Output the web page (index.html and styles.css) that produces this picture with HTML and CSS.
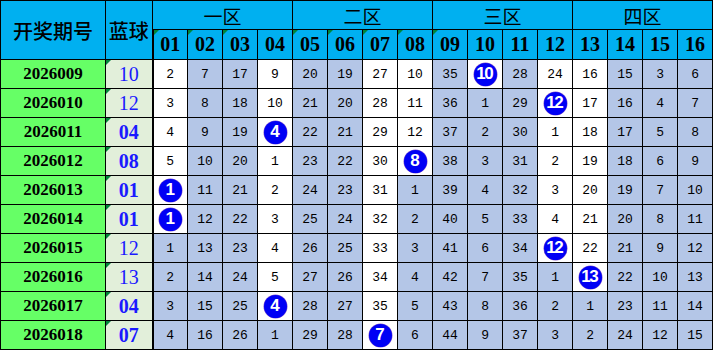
FILE: index.html
```html
<!DOCTYPE html>
<html lang="zh">
<head>
<meta charset="utf-8">
<title>蓝球遗漏</title>
<link rel="stylesheet" href="styles.css">
</head>
<body>
<table class="grid">
<colgroup><col class="c-per"><col class="c-blue"><col span="16" class="c-num"></colgroup>
<thead>
<tr class="h1">
<th rowspan="2" class="per-h">开奖期号</th>
<th rowspan="2" class="blue-h">蓝球</th>
<th colspan="4" class="zone z1">一区</th>
<th colspan="4" class="zone">二区</th>
<th colspan="4" class="zone">三区</th>
<th colspan="4" class="zone">四区</th>
</tr>
<tr class="h2">
<th class="num-h first tri">01</th><th class="num-h tri">02</th><th class="num-h tri">03</th><th class="num-h">04</th>
<th class="num-h tri">05</th><th class="num-h tri">06</th><th class="num-h tri">07</th><th class="num-h tri">08</th>
<th class="num-h tri">09</th><th class="num-h">10</th><th class="num-h">11</th><th class="num-h">12</th>
<th class="num-h">13</th><th class="num-h">14</th><th class="num-h">15</th><th class="num-h">16</th>
</tr>
</thead>
<tbody>
<tr><td class="per">2026009</td><td class="bl tri">10</td>
<td class="first w">2</td><td>7</td><td>17</td><td class="w">9</td>
<td>20</td><td>19</td><td class="w">27</td><td class="w">10</td>
<td>35</td><td class="w"><span class="ball">10</span></td><td>28</td><td class="w">24</td>
<td class="w">16</td><td>15</td><td>3</td><td class="last">6</td></tr>

<tr><td class="per">2026010</td><td class="bl tri">12</td>
<td class="first w">3</td><td>8</td><td>18</td><td class="w">10</td>
<td>21</td><td>20</td><td class="w">28</td><td class="w">11</td>
<td>36</td><td>1</td><td>29</td><td class="w"><span class="ball">12</span></td>
<td class="w">17</td><td>16</td><td>4</td><td class="last">7</td></tr>

<tr><td class="per">2026011</td><td class="bl tri bold">04</td>
<td class="first w">4</td><td>9</td><td>19</td><td class="w"><span class="ball">4</span></td>
<td>22</td><td>21</td><td class="w">29</td><td class="w">12</td>
<td>37</td><td>2</td><td>30</td><td class="w">1</td>
<td class="w">18</td><td>17</td><td>5</td><td class="last">8</td></tr>

<tr><td class="per">2026012</td><td class="bl tri bold">08</td>
<td class="first w">5</td><td>10</td><td>20</td><td class="w">1</td>
<td>23</td><td>22</td><td class="w">30</td><td class="w"><span class="ball">8</span></td>
<td>38</td><td>3</td><td>31</td><td class="w">2</td>
<td class="w">19</td><td>18</td><td>6</td><td class="last">9</td></tr>

<tr><td class="per">2026013</td><td class="bl tri bold">01</td>
<td class="first w"><span class="ball">1</span></td><td>11</td><td>21</td><td class="w">2</td>
<td>24</td><td>23</td><td class="w">31</td><td>1</td>
<td>39</td><td>4</td><td>32</td><td class="w">3</td>
<td class="w">20</td><td>19</td><td>7</td><td class="last">10</td></tr>

<tr><td class="per">2026014</td><td class="bl tri bold">01</td>
<td class="first w"><span class="ball">1</span></td><td>12</td><td>22</td><td class="w">3</td>
<td>25</td><td>24</td><td class="w">32</td><td>2</td>
<td>40</td><td>5</td><td>33</td><td class="w">4</td>
<td class="w">21</td><td>20</td><td>8</td><td class="last">11</td></tr>

<tr><td class="per">2026015</td><td class="bl tri">12</td>
<td class="first">1</td><td>13</td><td>23</td><td class="w">4</td>
<td>26</td><td>25</td><td class="w">33</td><td>3</td>
<td>41</td><td>6</td><td>34</td><td class="w"><span class="ball">12</span></td>
<td class="w">22</td><td>21</td><td>9</td><td class="last">12</td></tr>

<tr><td class="per">2026016</td><td class="bl tri">13</td>
<td class="first">2</td><td>14</td><td>24</td><td class="w">5</td>
<td>27</td><td>26</td><td class="w">34</td><td>4</td>
<td>42</td><td>7</td><td>35</td><td>1</td>
<td class="w"><span class="ball">13</span></td><td>22</td><td>10</td><td class="last">13</td></tr>

<tr><td class="per">2026017</td><td class="bl tri bold">04</td>
<td class="first">3</td><td>15</td><td>25</td><td class="w"><span class="ball">4</span></td>
<td>28</td><td>27</td><td class="w">35</td><td>5</td>
<td>43</td><td>8</td><td>36</td><td>2</td>
<td>1</td><td>23</td><td>11</td><td class="last">14</td></tr>

<tr><td class="per">2026018</td><td class="bl tri bold">07</td>
<td class="first">4</td><td>16</td><td>26</td><td>1</td>
<td>29</td><td>28</td><td class="w"><span class="ball">7</span></td><td>6</td>
<td>44</td><td>9</td><td>37</td><td>3</td>
<td>2</td><td>24</td><td>12</td><td class="last">15</td></tr>
</tbody>
</table>
</body>
</html>
```

FILE: styles.css
```css
html, body {
  margin: 0;
  padding: 0;
  background: #ffffff;
}

.grid {
  border-collapse: collapse;
  table-layout: fixed;
  width: 713px;
}

.c-per { width: 105px; }
.c-blue { width: 47px; }
.c-num { width: 35px; }

.grid th,
.grid td {
  border: 1px solid #000;
  padding: 0;
  text-align: center;
  vertical-align: middle;
  position: relative;
  overflow: visible;
}

.h1 { height: 29px; }
.h2 { height: 30px; }
.grid tbody tr { height: 29px; }

.grid th {
  background: #00b0f0;
  color: #000;
}

.per-h,
.blue-h {
  font-family: "Noto Sans CJK SC", sans-serif;
  font-size: 20px;
  font-weight: 500;
  padding-top: 6px;
}

.zone {
  font-family: "Noto Sans CJK SC", sans-serif;
  font-size: 19px;
  font-weight: 400;
  border-left: 2px solid #000;
}

.num-h {
  font-family: "Liberation Serif", serif;
  font-size: 20px;
  font-weight: 700;
  padding-top: 3px;
}

.first {
  border-left: 2px solid #000 !important;
}

.per {
  background: #66ff66;
  font-family: "Liberation Serif", serif;
  font-size: 17px;
  font-weight: 700;
  color: #000;
}

.bl {
  background: #e2efda;
  font-family: "Liberation Serif", serif;
  font-size: 20px;
  color: #1a1aff;
}

.bl.bold {
  font-weight: 700;
}

.grid tbody td:not(.per):not(.bl) {
  background: #b4c6e7;
  font-family: "Liberation Mono", monospace;
  font-size: 13px;
  color: #000;
}

.grid tbody td.w:not(.per):not(.bl) {
  background: #ffffff;
}

.grid tbody td.last {
  font-family: "DejaVu Sans", sans-serif;
  font-size: 12px;
  color: #1a1a1a;
}

.tri::before {
  content: "";
  position: absolute;
  left: 0;
  top: 0;
  border-top: 5px solid #00863a;
  border-right: 5px solid transparent;
}

.ball {
  display: inline-flex;
  align-items: center;
  justify-content: center;
  width: 23px;
  height: 23px;
  border-radius: 50%;
  background: #0000f5;
  color: #fff;
  font-family: "Liberation Sans", sans-serif;
  font-weight: 700;
  font-size: 17px;
  letter-spacing: -1.5px;
  text-indent: -1.5px;
  vertical-align: middle;
  box-shadow: 0 0 0 0.5px #8a5cc8;
}
```
